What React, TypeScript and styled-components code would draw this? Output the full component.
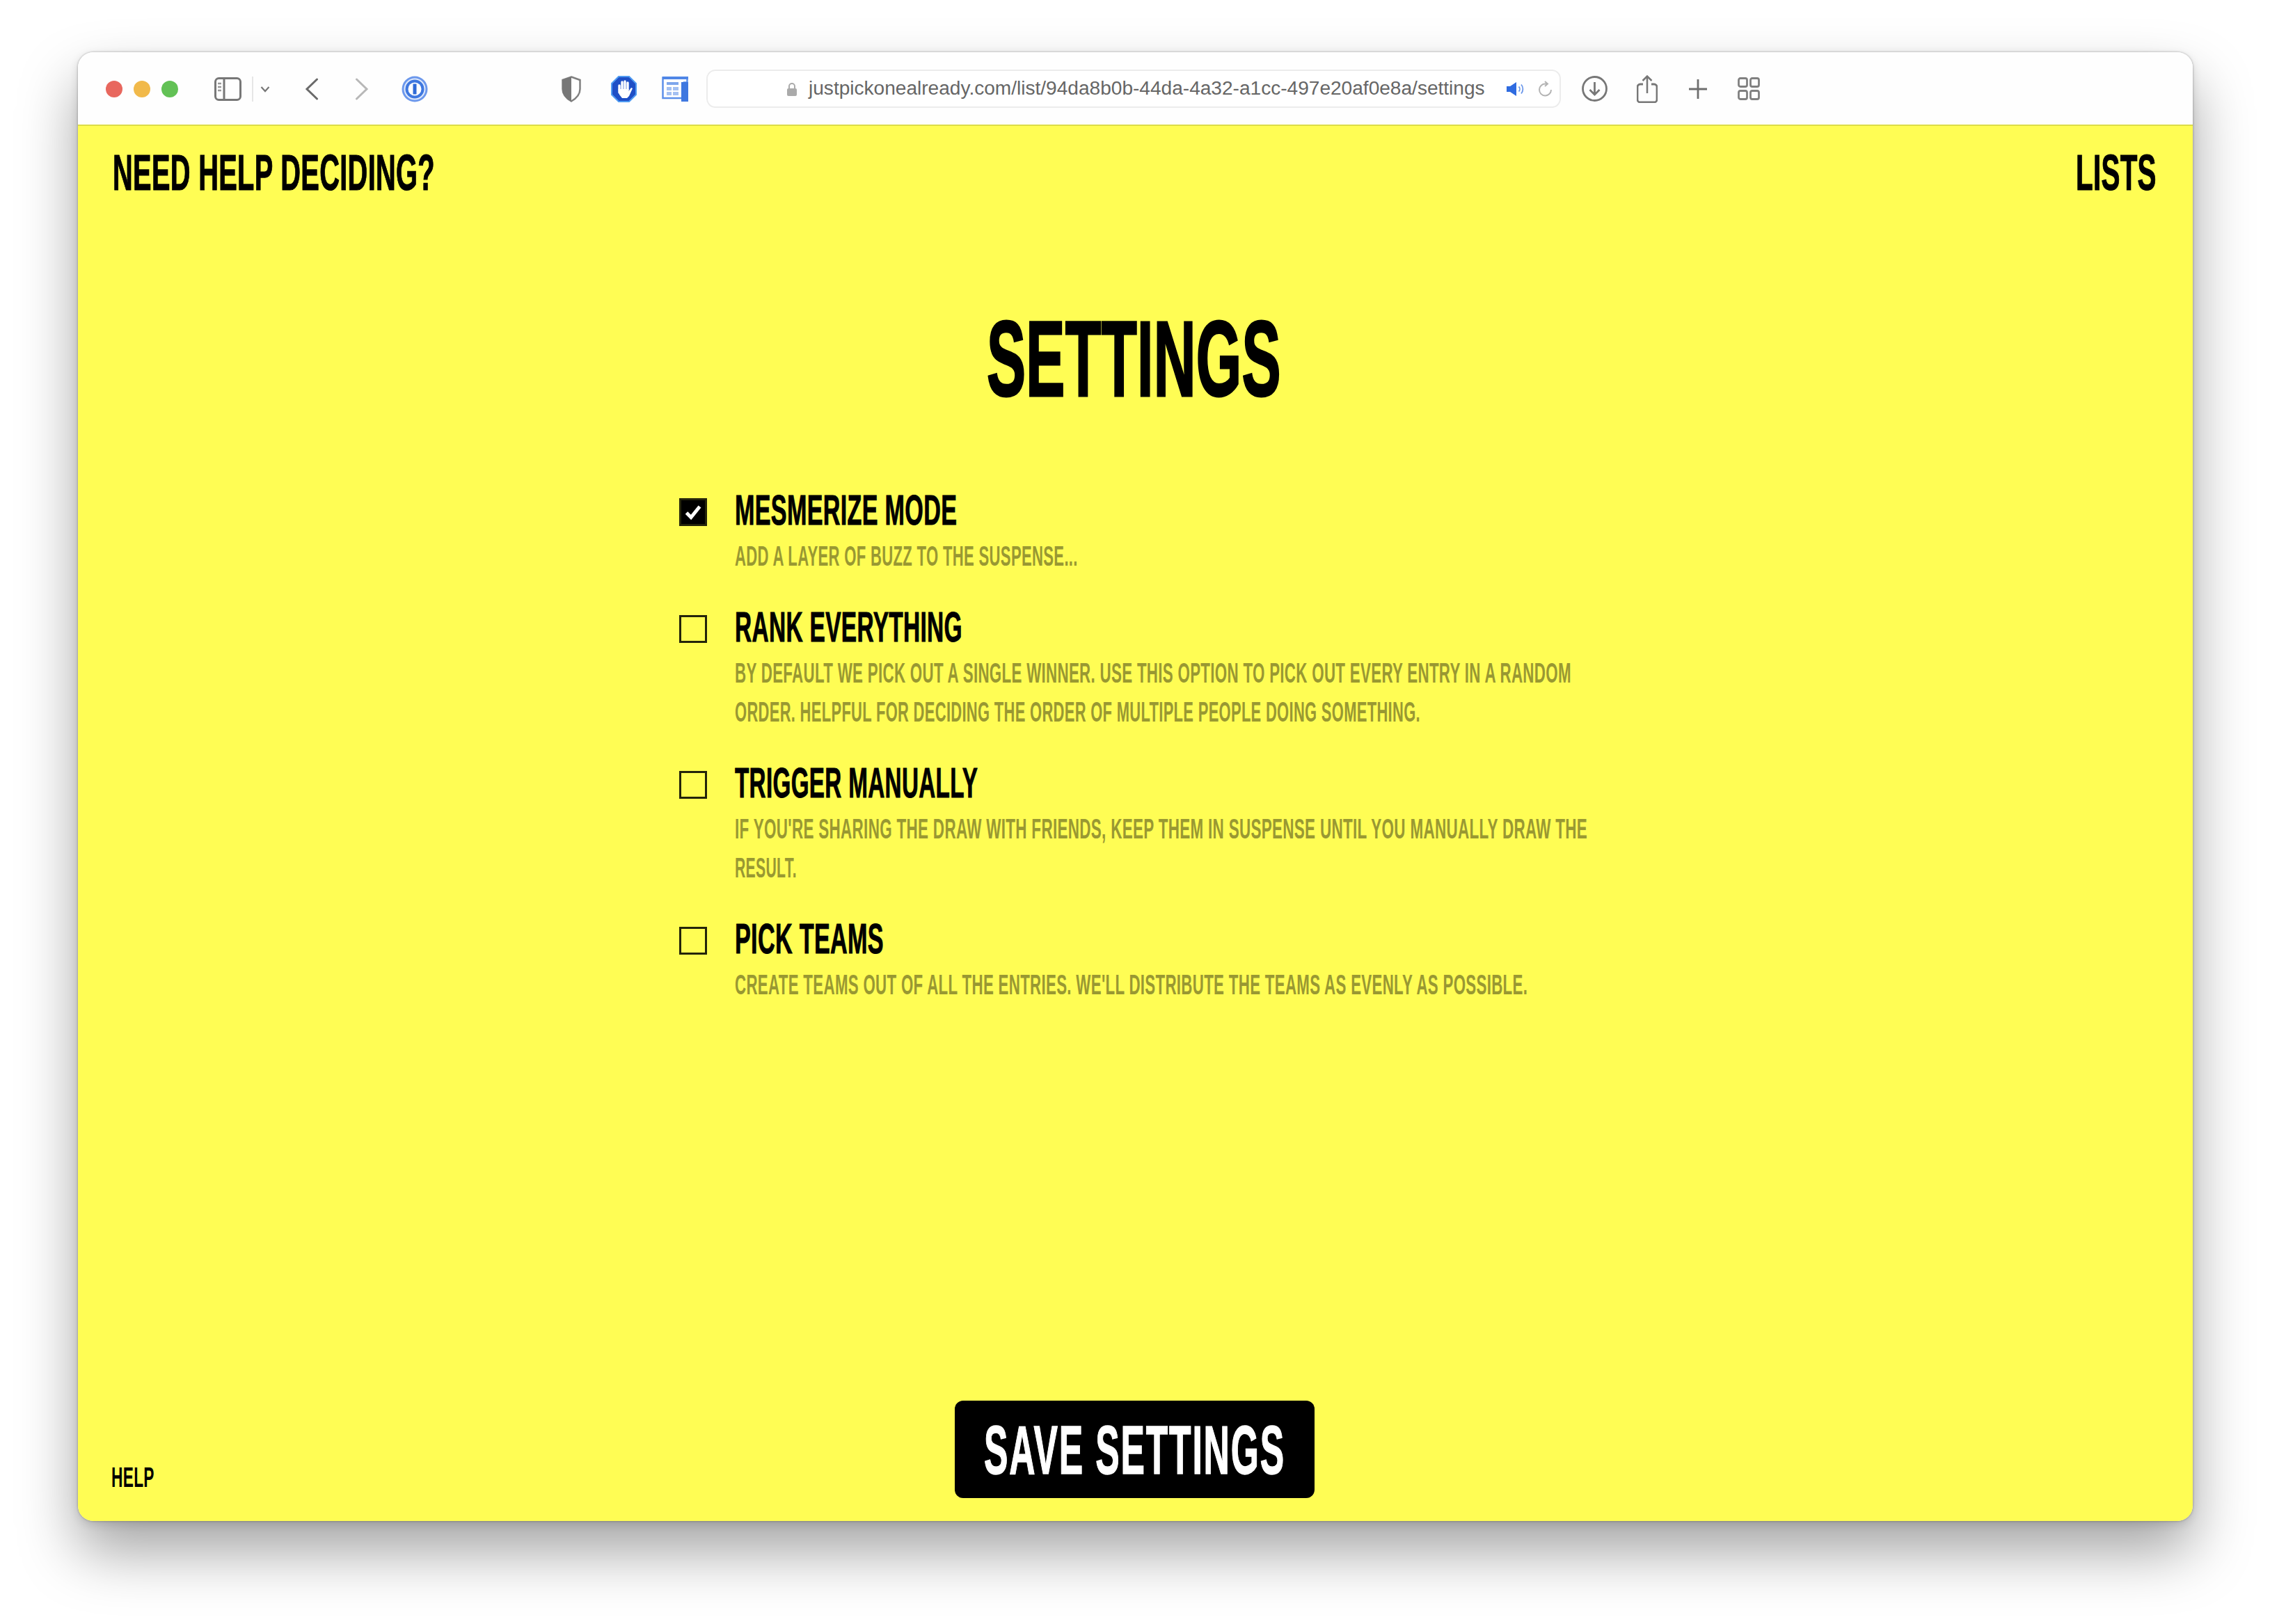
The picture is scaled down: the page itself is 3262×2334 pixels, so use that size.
import React, { useLayoutEffect, useRef } from "react";
import styled, { createGlobalStyle } from "styled-components";

const Global = createGlobalStyle`
  html, body { margin: 0; padding: 0; background: #fff; }
  #root { width: 3262px; height: 2334px; overflow: hidden; }
`;

const DISPLAY = `"Liberation Sans Narrow", "Liberation Sans", Arial, sans-serif`;

const FitBox = styled.span<{ $w: number }>`
  display: block;
  width: ${(p) => p.$w}px;
`;
const FitInner = styled.span`
  display: inline-block;
  white-space: nowrap;
  transform-origin: 0 50%;
`;

function Fit({ w, children, className }: { w: number; children: React.ReactNode; className?: string }) {
  const ref = useRef<HTMLSpanElement>(null);
  useLayoutEffect(() => {
    const el = ref.current;
    if (el) el.style.transform = `scaleX(${w / el.offsetWidth})`;
  }, [w]);
  return (
    <FitBox $w={w} className={className}>
      <FitInner ref={ref}>{children}</FitInner>
    </FitBox>
  );
}

const Stage = styled.div`
  box-sizing: border-box;
  width: 3262px;
  height: 2334px;
  padding: 75px 111px 148px 112px;
`;
const Window = styled.div`
  height: 100%;
  display: flex;
  flex-direction: column;
  border-radius: 22px;
  overflow: hidden;
  box-shadow: 0 0 3px rgba(0, 0, 0, 0.35), 0 4px 14px rgba(0, 0, 0, 0.12), 0 44px 84px rgba(0, 0, 0, 0.36);
`;
const Toolbar = styled.div`
  flex: none;
  box-sizing: border-box;
  height: 106px;
  display: flex;
  align-items: center;
  padding: 1px 0 0 40px;
  background: #fefefe;
  border-bottom: 2px solid #dcdc48;
`;
const Lights = styled.div`
  display: flex;
  gap: 16px;
`;
const Light = styled.span<{ $c: string }>`
  width: 24px;
  height: 24px;
  border-radius: 50%;
  background: ${(p) => p.$c};
`;
const Tool = styled.svg<{ $at: number }>`
  flex: none;
  display: block;
  margin-left: ${(p) => p.$at}px;
  fill: none;
`;
const UrlBar = styled.div`
  flex: none;
  box-sizing: border-box;
  width: 1228px;
  height: 55px;
  margin-left: 25px;
  padding-left: 113px;
  display: flex;
  align-items: center;
  border: 2px solid #ececec;
  border-radius: 13px;
  background: #fff;
`;
const UrlText = styled(Fit)`
  margin-left: 16px;
  font: 400 27px/1 "Liberation Sans", Arial, sans-serif;
  color: #666;
`;
const Page = styled.main`
  flex: 1;
  min-height: 0;
  display: flex;
  flex-direction: column;
  background: #fffd54;
  color: #000;
  font-family: ${DISPLAY};
  font-weight: 700;
  letter-spacing: 0.035em;
`;
const TopBar = styled.header`
  display: flex;
  justify-content: space-between;
  padding: 30px 52px 0 50px;
`;
const NavText = styled(Fit)`
  font-size: 73px;
  line-height: 1;
  -webkit-text-stroke: 1.2px #000;
`;
const Title = styled(Fit)`
  margin: 155px 0 110px 1306px;
  font-size: 154px;
  line-height: 1;
  -webkit-text-stroke: 3px #000;
`;
const Options = styled.div`
  width: 1308px;
  margin-left: 864px;
  display: flex;
  flex-direction: column;
  gap: 44px;
`;
const Option = styled.div`
  display: flex;
  gap: 40px;
  align-items: flex-start;
`;
const Box = styled.span<{ $on?: boolean }>`
  flex: none;
  box-sizing: border-box;
  width: 40px;
  height: 40px;
  margin-top: 13px;
  display: flex;
  align-items: center;
  justify-content: center;
  border: 3px solid #24240a;
  background: ${(p) => (p.$on ? "#000" : "transparent")};
`;
const Label = styled(Fit)`
  margin-bottom: 7px;
  font-size: 61px;
  line-height: 1;
  -webkit-text-stroke: 1px #000;
`;
const Desc = styled(Fit)`
  font-size: 41px;
  line-height: 56px;
  color: #999832;
`;
const Footer = styled.footer`
  margin-top: auto;
  padding: 0 50px 33px 48px;
  display: grid;
  grid-template-columns: 1fr auto 1fr;
  align-items: end;
`;
const HelpText = styled(Fit)`
  margin-bottom: 9px;
  font-size: 41px;
  line-height: 1;
`;
const SaveButton = styled.button`
  width: 517px;
  height: 140px;
  padding: 0;
  display: flex;
  align-items: center;
  justify-content: center;
  border: 0;
  border-radius: 12px;
  background: #000;
  color: #fff;
  font-family: ${DISPLAY};
  font-weight: 700;
  font-size: 99px;
  line-height: 1;
  letter-spacing: 0.035em;
  -webkit-text-stroke: 1.5px #fff;
`;

const options = [
  { label: "MESMERIZE MODE", w: 319, on: true, desc: [["ADD A LAYER OF BUZZ TO THE SUSPENSE...", 493]] },
  {
    label: "RANK EVERYTHING",
    w: 327,
    desc: [
      ["BY DEFAULT WE PICK OUT A SINGLE WINNER. USE THIS OPTION TO PICK OUT EVERY ENTRY IN A RANDOM", 1202],
      ["ORDER. HELPFUL FOR DECIDING THE ORDER OF MULTIPLE PEOPLE DOING SOMETHING.", 985],
    ],
  },
  {
    label: "TRIGGER MANUALLY",
    w: 349,
    desc: [
      ["IF YOU'RE SHARING THE DRAW WITH FRIENDS, KEEP THEM IN SUSPENSE UNTIL YOU MANUALLY DRAW THE", 1225],
      ["RESULT.", 89],
    ],
  },
  {
    label: "PICK TEAMS",
    w: 214,
    desc: [["CREATE TEAMS OUT OF ALL THE ENTRIES. WE'LL DISTRIBUTE THE TEAMS AS EVENLY AS POSSIBLE.", 1139]],
  },
] as { label: string; w: number; on?: boolean; desc: [string, number][] }[];

export default function App() {
  return (
    <>
      <Global />
      <Stage>
        <Window>
          <Toolbar>
            <Lights>
              <Light $c="#e8675e" />
              <Light $c="#f1b94a" />
              <Light $c="#62c155" />
            </Lights>
            <Tool $at={52} width="39" height="34" viewBox="0 0 39 34">
              <rect x="1.5" y="1.5" width="36" height="31" rx="5" stroke="#777" strokeWidth="3" />
              <path d="M14 2v30" stroke="#777" strokeWidth="3" />
              <path d="M5 9h5M5 14h5M5 19h5" stroke="#999" strokeWidth="2.5" />
            </Tool>
            <Tool $at={15} width="2" height="36" viewBox="0 0 2 36">
              <path d="M1 0v36" stroke="#e6e6e6" strokeWidth="2" />
            </Tool>
            <Tool $at={10} width="14" height="10" viewBox="0 0 14 10">
              <path d="M1.5 2L7 8l5.5-6" stroke="#777" strokeWidth="2.2" />
            </Tool>
            <Tool $at={50} width="20" height="32" viewBox="0 0 20 32">
              <path d="M17.5 2L3 16l14.5 14" stroke="#6a6a6a" strokeWidth="3" strokeLinecap="round" />
            </Tool>
            <Tool $at={52} width="20" height="32" viewBox="0 0 20 32">
              <path d="M2.5 2L17 16 2.5 30" stroke="#b8b8b8" strokeWidth="3" strokeLinecap="round" />
            </Tool>
            <Tool $at={47} width="38" height="38" viewBox="0 0 38 38">
              <circle cx="19" cy="19" r="18.5" fill="#6c98ec" />
              <circle cx="19" cy="19" r="15.5" fill="#dfe9fb" />
              <circle cx="19" cy="19" r="13.5" fill="#3f78e0" />
              <circle cx="19" cy="19" r="9.5" fill="#fff" />
              <path d="M19 11.5v15" stroke="#2f6ad6" strokeWidth="5" />
            </Tool>
            <Tool $at={192} width="28" height="38" viewBox="0 0 28 38">
              <path d="M14 1.5L26.5 6v13c0 8-5.5 13.5-12.5 17.5C7 32.5 1.5 27 1.5 19V6z" fill="#fff" stroke="#808080" strokeWidth="2.5" />
              <path d="M14 1L1 6v13c0 8 6 14 13 18z" fill="#777" />
            </Tool>
            <Tool $at={43} width="37" height="38" viewBox="0 0 37 38">
              <path d="M11 1h15l10 10v16L26 37H11L1 27V11z" fill="#1f4fc6" stroke="#4f9bf2" strokeWidth="2" />
              <path d="M12 14v10M16 9v11M20 8v12M24 10v10" stroke="#fff" strokeWidth="3.4" strokeLinecap="round" />
              <path d="M10.5 19h15v3l3.5-5 2 1-5 11-3 3h-7l-4-5z" fill="#fff" />
            </Tool>
            <Tool $at={36} width="39" height="38" viewBox="0 0 39 38">
              <path d="M1.5 2.5h35v7H32V32H1.5z" fill="#fff" stroke="#5c8fea" strokeWidth="2.5" />
              <path d="M1 1h37v4H1z" fill="#4f86e6" />
              <path d="M28 9h10v28H28z" fill="#3f78e0" />
              <path d="M7 9h17v4H7z" fill="#7ea6ec" />
              <path d="M7 16h7v5H7zM16 16h8v5h-8zM7 23h7v5H7zM16 23h8v5h-8z" fill="#a4c0f2" />
            </Tool>
            <UrlBar>
              <Tool $at={0} width="16" height="20" viewBox="0 0 16 20">
                <path d="M4 9V6a4 4 0 018 0v3" stroke="#aaa" strokeWidth="2" />
                <rect x="1" y="9" width="14" height="11" rx="2" fill="#aaa" />
              </Tool>
              <UrlText w={972}>justpickonealready.com/list/94da8b0b-44da-4a32-a1cc-497e20af0e8a/settings</UrlText>
              <Tool $at={30} width="27" height="20" viewBox="0 0 27 20">
                <path d="M1 6h5l9-6v20l-9-6H1z" fill="#2f6be0" />
                <path d="M18.5 6.5a5 5 0 010 7M22 3.5a10 10 0 010 13" stroke="#6b97ea" strokeWidth="1.8" />
              </Tool>
              <Tool $at={19} width="22" height="24" viewBox="0 0 22 24">
                <path d="M19 13a8.5 8.5 0 11-8-8.5h2M10 1l4 3.5L10 8" stroke="#b4b4b4" strokeWidth="2" />
              </Tool>
            </UrlBar>
            <Tool $at={30} width="37" height="37" viewBox="0 0 37 37">
              <circle cx="18.5" cy="18.5" r="17" stroke="#777" strokeWidth="2.8" />
              <path d="M18.5 9v18M11.5 20l7 7 7-7" stroke="#777" strokeWidth="2.8" />
            </Tool>
            <Tool $at={42} width="30" height="40" viewBox="0 0 30 40">
              <path d="M9 13H5a4 4 0 00-4 4v18a4 4 0 004 4h20a4 4 0 004-4V17a4 4 0 00-4-4h-4" stroke="#777" strokeWidth="2.8" />
              <path d="M15 26V2M8.5 8L15 1.5 21.5 8" stroke="#777" strokeWidth="2.5" />
            </Tool>
            <Tool $at={45} width="26" height="30" viewBox="0 0 26 30">
              <path d="M13 1v28M0 15h26" stroke="#6e6e6e" strokeWidth="2.8" />
            </Tool>
            <Tool $at={44} width="32" height="33" viewBox="0 0 32 33">
              <g stroke="#808080" strokeWidth="2.8">
                <rect x="1.5" y="1.5" width="12" height="12" rx="2.5" />
                <rect x="18.5" y="1.5" width="12" height="12" rx="2.5" />
                <rect x="1.5" y="19.5" width="12" height="12" rx="2.5" />
                <rect x="18.5" y="19.5" width="12" height="12" rx="2.5" />
              </g>
            </Tool>
          </Toolbar>
          <Page>
            <TopBar>
              <NavText w={463}>NEED HELP DECIDING?</NavText>
              <NavText w={116}>LISTS</NavText>
            </TopBar>
            <Title w={423}>SETTINGS</Title>
            <Options>
              {options.map((o) => (
                <Option key={o.label}>
                  <Box $on={o.on}>
                    {o.on && (
                      <svg width="26" height="22" viewBox="0 0 26 22" fill="none">
                        <path d="M3.5 12l6.5 6.5L22.5 3" stroke="#fff" strokeWidth="5" />
                      </svg>
                    )}
                  </Box>
                  <div>
                    <Label w={o.w}>{o.label}</Label>
                    {o.desc.map(([t, w]) => (
                      <Desc key={t} w={w}>
                        {t}
                      </Desc>
                    ))}
                  </div>
                </Option>
              ))}
            </Options>
            <Footer>
              <HelpText w={62}>HELP</HelpText>
              <SaveButton>
                <Fit w={433}>SAVE SETTINGS</Fit>
              </SaveButton>
            </Footer>
          </Page>
        </Window>
      </Stage>
    </>
  );
}
